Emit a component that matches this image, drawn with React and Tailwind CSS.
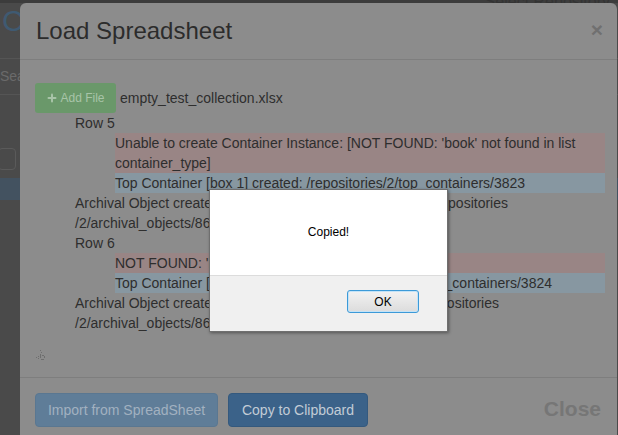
import { Plus } from "lucide-react";

const FONT = { fontFamily: '"Liberation Sans", Arial, sans-serif' };

function Line({ indent, tone, children }) {
  const bg =
    tone === "err" ? "bg-[#998585]" : tone === "info" ? "bg-[#8797a1]" : "";
  return (
    <div className={`${indent ? "ml-[80px] mr-[-3px]" : "ml-[40px]"} ${bg} h-5 whitespace-nowrap`}>
      {children}
    </div>
  );
}

// line whose last word ends at a set width (the middle lies under the alert)
function Spread({ w, left, right }) {
  return (
    <div className="flex justify-between whitespace-nowrap" style={{ width: w }}>
      <span>{left}</span>
      <span>{right}</span>
    </div>
  );
}

export default function App() {
  return (
    <div className="relative h-[435px] w-[618px] overflow-hidden bg-[#4a4a4a]" style={FONT}>
      {/* page behind the modal */}
      <div className="flex flex-col">
        <div className="h-[3px] bg-[#3c3c3c]"></div>
        <div className="flex h-[56px] items-start border-b border-[#555] pl-[2px] pt-[2px] text-[30px] leading-8 text-[#3f5a72]">
          Co
        </div>
        <div className="flex h-[36px] items-center border-b border-[#555] text-[14px] text-[#6a6a6a]">
          Search
        </div>
        <div className="mt-[53px] ml-[-2px] h-[22px] w-[18px] rounded-sm border border-[#5a5a5a]"></div>
        <div className="mt-[8px] h-[22px] bg-[#435260]"></div>
      </div>
      <div className="absolute right-[8px] top-[-10px] text-[16px] text-[#333]">Select Repository</div>

      {/* modal */}
      <div className="absolute left-[20px] top-[3px] h-[460px] w-[597px] rounded-t-[6px] bg-[#8c8c8c] text-[14px] leading-5 text-[#2e2e2e]">
        <div className="flex h-[57px] items-center justify-between border-b border-[#7e7e7e] pl-[16px] pr-[14px]">
          <div className="pb-[1px] text-[24px] leading-[26px] text-[#2c2c2c]">Load Spreadsheet</div>
          <div className="mb-[3px] text-[21px] font-bold leading-none text-[#707070]">×</div>
        </div>
        <div className="px-[15px] pt-[23px]">
          <div className="flex h-[30px] items-center gap-[4px]">
            <div className="flex h-[30px] w-[81px] items-center justify-center gap-[2px] rounded-[3px] bg-[#6a986a] text-[12px] text-[#a8c4a8]">
              <Plus size={12} strokeWidth={4} />
              Add File
            </div>
            <span>empty_test_collection.xlsx</span>
          </div>
          <Line>Row 5</Line>
          <div className="ml-[80px] mr-[-3px] bg-[#998585]">
            Unable to create Container Instance: [NOT FOUND: 'book' not found in list
            <br />
            container_type]
          </div>
          <Line indent tone="info">
            Top Container [box 1] created: /repositories/2/top_containers/3823
          </Line>
          <Line>
            <Spread w={433} left="Archival Object created: [Test Item 1]" right="/repositories" />
          </Line>
          <Line>/2/archival_objects/8623</Line>
          <Line>Row 6</Line>
          <Line indent tone="err">NOT FOUND: 'book' not found in list container_type</Line>
          <Line indent tone="info">
            <Spread w={437} left="Top Container [box 2] created:" right="/repositories/2/top_containers/3824" />
          </Line>
          <Line>
            <Spread w={424} left="Archival Object created: [Test Item 2]" right="/repositories" />
          </Line>
          <Line>/2/archival_objects/8624</Line>
          <div className="h-[44px] pl-[1px] pt-[17px]">
            <svg width="10" height="10" viewBox="0 0 10 10">
              <g fill="#6e6e6e">
                <rect x="0" y="7" width="1" height="1" />
                <rect x="2" y="6" width="1" height="1" />
                <rect x="2" y="8" width="1" height="1" />
                <rect x="4" y="0" width="1" height="1" />
                <rect x="5" y="2" width="1" height="1" />
                <rect x="4" y="4" width="1" height="4" />
                <rect x="6" y="5" width="2" height="1" />
                <rect x="8" y="6" width="1" height="2" />
                <rect x="5" y="9" width="3" height="1" />
              </g>
            </svg>
          </div>
        </div>
        <div className="flex items-center justify-between border-t border-[#7e7e7e] px-[15px] pt-[15px]">
          <div className="flex gap-[10px]">
            <div className="flex h-[34px] w-[183px] items-center justify-center rounded-[4px] border border-[#5a7791] bg-[#5f7d98] text-[14px] text-[#a2b1c0]">
              Import from SpreadSheet
            </div>
            <div className="flex h-[34px] w-[140px] items-center justify-center rounded-[4px] border border-[#34597e] bg-[#3b6289] text-[14px] text-[#c2ccd6]">
              Copy to Clipboard
            </div>
          </div>
          <div className="pb-[2px] pr-[1px] text-[21px] font-bold text-[#767676]">Close</div>
        </div>
      </div>

      {/* alert */}
      <div className="absolute left-[209px] top-[189px] flex h-[143px] w-[239px] flex-col border border-[#6f6f6f] bg-white shadow-[1px_1px_3px_rgba(0,0,0,0.4)]">
        <div className="flex h-[85px] items-center justify-center pb-[2px] text-[12px] text-black">Copied!</div>
        <div className="flex flex-1 items-start justify-end border-t border-[#dcdcdc] bg-[#f0f0f0] pr-[28px] pt-[14px]">
          <div className="flex h-[23px] w-[72px] items-center justify-center rounded-[3px] border border-[#3c9ad8] bg-gradient-to-b from-[#f2f2f2] to-[#dcdcdc] text-[12px] text-black shadow-[inset_0_0_0_1px_#c4e3f7]">
            OK
          </div>
        </div>
      </div>
    </div>
  );
}
